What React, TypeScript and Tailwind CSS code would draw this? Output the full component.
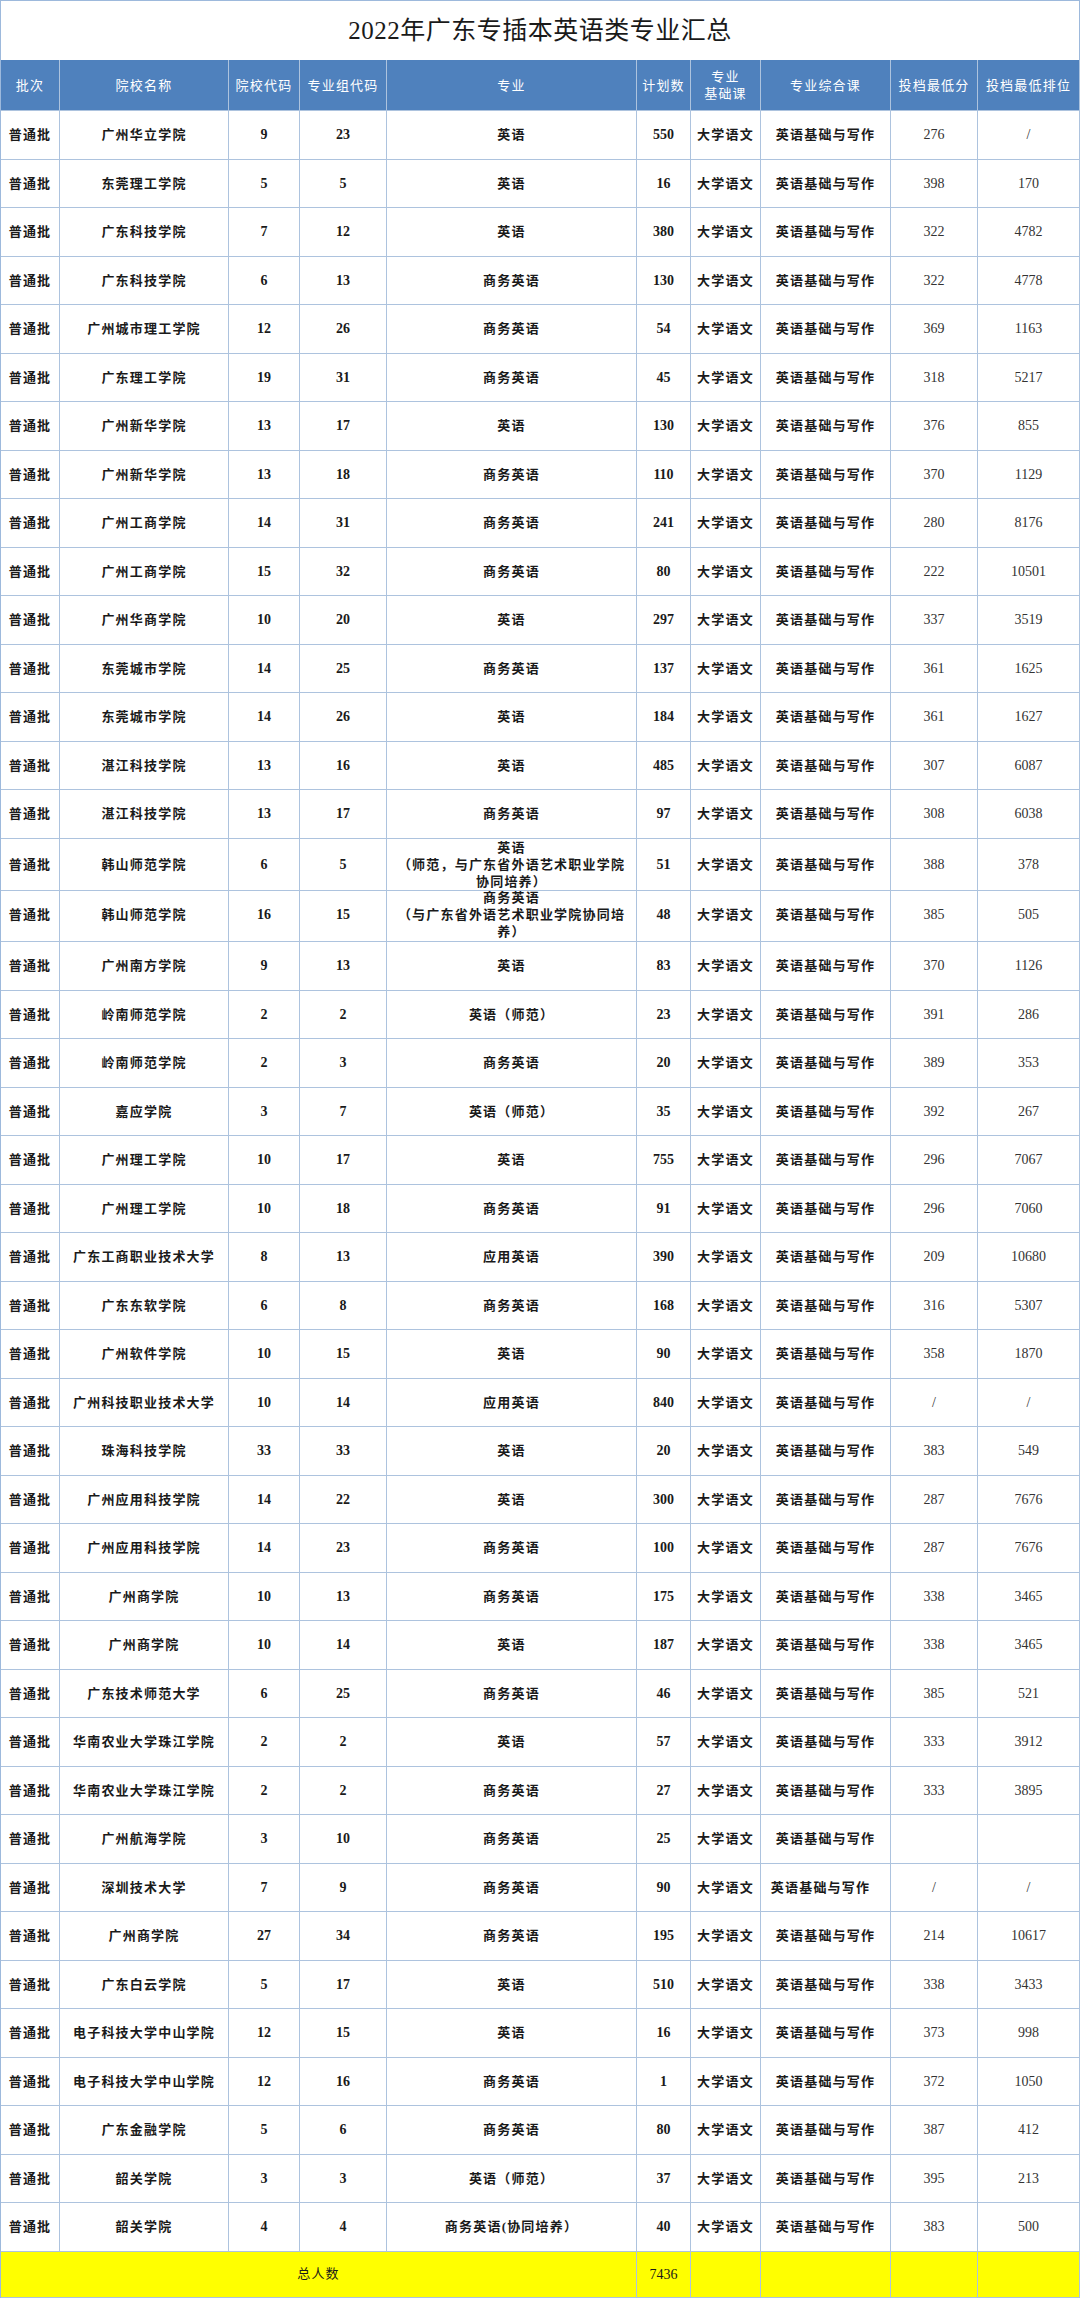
import type { ReactNode } from 'react'
import clsx from 'clsx'

const cols =
  'grid grid-cols-[59px_169px_71px_87px_250px_54px_70px_130px_87px_102px]'

type Row = [string, string, string, ReactNode, string, string, string]

const rows: Row[] = [
  ['广州华立学院', '9', '23', '英语', '550', '276', '/'],
  ['东莞理工学院', '5', '5', '英语', '16', '398', '170'],
  ['广东科技学院', '7', '12', '英语', '380', '322', '4782'],
  ['广东科技学院', '6', '13', '商务英语', '130', '322', '4778'],
  ['广州城市理工学院', '12', '26', '商务英语', '54', '369', '1163'],
  ['广东理工学院', '19', '31', '商务英语', '45', '318', '5217'],
  ['广州新华学院', '13', '17', '英语', '130', '376', '855'],
  ['广州新华学院', '13', '18', '商务英语', '110', '370', '1129'],
  ['广州工商学院', '14', '31', '商务英语', '241', '280', '8176'],
  ['广州工商学院', '15', '32', '商务英语', '80', '222', '10501'],
  ['广州华商学院', '10', '20', '英语', '297', '337', '3519'],
  ['东莞城市学院', '14', '25', '商务英语', '137', '361', '1625'],
  ['东莞城市学院', '14', '26', '英语', '184', '361', '1627'],
  ['湛江科技学院', '13', '16', '英语', '485', '307', '6087'],
  ['湛江科技学院', '13', '17', '商务英语', '97', '308', '6038'],
  [
    '韩山师范学院',
    '6',
    '5',
    <>
      英语
      <br />
      （师范，与广东省外语艺术职业学院
      <br />
      协同培养）
    </>,
    '51',
    '388',
    '378',
  ],
  [
    '韩山师范学院',
    '16',
    '15',
    <>
      商务英语
      <br />
      （与广东省外语艺术职业学院协同培
      <br />
      养）
    </>,
    '48',
    '385',
    '505',
  ],
  ['广州南方学院', '9', '13', '英语', '83', '370', '1126'],
  ['岭南师范学院', '2', '2', '英语（师范）', '23', '391', '286'],
  ['岭南师范学院', '2', '3', '商务英语', '20', '389', '353'],
  ['嘉应学院', '3', '7', '英语（师范）', '35', '392', '267'],
  ['广州理工学院', '10', '17', '英语', '755', '296', '7067'],
  ['广州理工学院', '10', '18', '商务英语', '91', '296', '7060'],
  ['广东工商职业技术大学', '8', '13', '应用英语', '390', '209', '10680'],
  ['广东东软学院', '6', '8', '商务英语', '168', '316', '5307'],
  ['广州软件学院', '10', '15', '英语', '90', '358', '1870'],
  ['广州科技职业技术大学', '10', '14', '应用英语', '840', '/', '/'],
  ['珠海科技学院', '33', '33', '英语', '20', '383', '549'],
  ['广州应用科技学院', '14', '22', '英语', '300', '287', '7676'],
  ['广州应用科技学院', '14', '23', '商务英语', '100', '287', '7676'],
  ['广州商学院', '10', '13', '商务英语', '175', '338', '3465'],
  ['广州商学院', '10', '14', '英语', '187', '338', '3465'],
  ['广东技术师范大学', '6', '25', '商务英语', '46', '385', '521'],
  ['华南农业大学珠江学院', '2', '2', '英语', '57', '333', '3912'],
  ['华南农业大学珠江学院', '2', '2', '商务英语', '27', '333', '3895'],
  ['广州航海学院', '3', '10', '商务英语', '25', '', ''],
  ['深圳技术大学', '7', '9', '商务英语', '90', '/', '/'],
  ['广州商学院', '27', '34', '商务英语', '195', '214', '10617'],
  ['广东白云学院', '5', '17', '英语', '510', '338', '3433'],
  ['电子科技大学中山学院', '12', '15', '英语', '16', '373', '998'],
  ['电子科技大学中山学院', '12', '16', '商务英语', '1', '372', '1050'],
  ['广东金融学院', '5', '6', '商务英语', '80', '387', '412'],
  ['韶关学院', '3', '3', '英语（师范）', '37', '395', '213'],
  ['韶关学院', '4', '4', '商务英语(协同培养）', '40', '383', '500'],
]

function Cell({ children, className }: { children?: ReactNode; className?: string }) {
  return (
    <div
      className={clsx(
        'flex items-center justify-center whitespace-nowrap border-r border-b border-[#adc3de] text-center',
        className,
      )}
    >
      {children}
    </div>
  )
}

export default function App() {
  return (
    <div className="w-[1080px] bg-white font-['Liberation_Serif','Noto_Sans_CJK_SC',serif] text-[#1a1a1a]">
      <div className="flex h-[60px] items-center justify-center border-x border-t border-[#9db9dc] text-[25px] tracking-[0.5px]">
        2022年广东专插本英语类专业汇总
      </div>

      <div className="border-l border-[#9db9dc]">
        {/* header */}
        <div className={clsx(cols, 'h-[51px] bg-[#4f81bd] text-[13px] leading-[17px] tracking-[1.2px] text-white')}>
          {['批次', '院校名称', '院校代码', '专业组代码', '专业', '计划数'].map((h) => (
            <Cell key={h} className="border-[#83a7d3]">
              {h}
            </Cell>
          ))}
          <Cell className="border-[#83a7d3]">
            专业
            <br />
            基础课
          </Cell>
          {['专业综合课', '投档最低分', '投档最低排位'].map((h) => (
            <Cell key={h} className="border-[#83a7d3]">
              {h}
            </Cell>
          ))}
        </div>

        {rows.map(([name, code, group, major, plan, score, rank], i) => (
          <div
            key={i}
            className={clsx(cols, i === 16 ? 'h-[55px]' : 'h-[48.5px]', 'text-[13px] leading-[17px] tracking-[1.2px]')}
          >
            <Cell className="font-bold">普通批</Cell>
            <Cell className="font-bold">{name}</Cell>
            <Cell className="text-[14px] font-bold tracking-normal">{code}</Cell>
            <Cell className="text-[14px] font-bold tracking-normal">{group}</Cell>
            <Cell className="font-bold">{major}</Cell>
            <Cell className="text-[14px] font-bold tracking-normal">{plan}</Cell>
            <Cell className="font-bold">大学语文</Cell>
            <Cell className={clsx('font-bold', i === 36 && 'pr-[10px]')}>英语基础与写作</Cell>
            <Cell className="text-[14px] tracking-normal text-[#333]">{score}</Cell>
            <Cell className="text-[14px] tracking-normal text-[#333]">{rank}</Cell>
          </div>
        ))}

        {/* total */}
        <div className={clsx(cols, 'h-[46px] bg-[#ffff00] text-[13px] tracking-[1.2px]')}>
          <Cell className="col-span-5">总人数</Cell>
          <Cell className="text-[14px] tracking-normal">7436</Cell>
          <Cell />
          <Cell />
          <Cell />
          <Cell />
        </div>
      </div>
    </div>
  )
}
